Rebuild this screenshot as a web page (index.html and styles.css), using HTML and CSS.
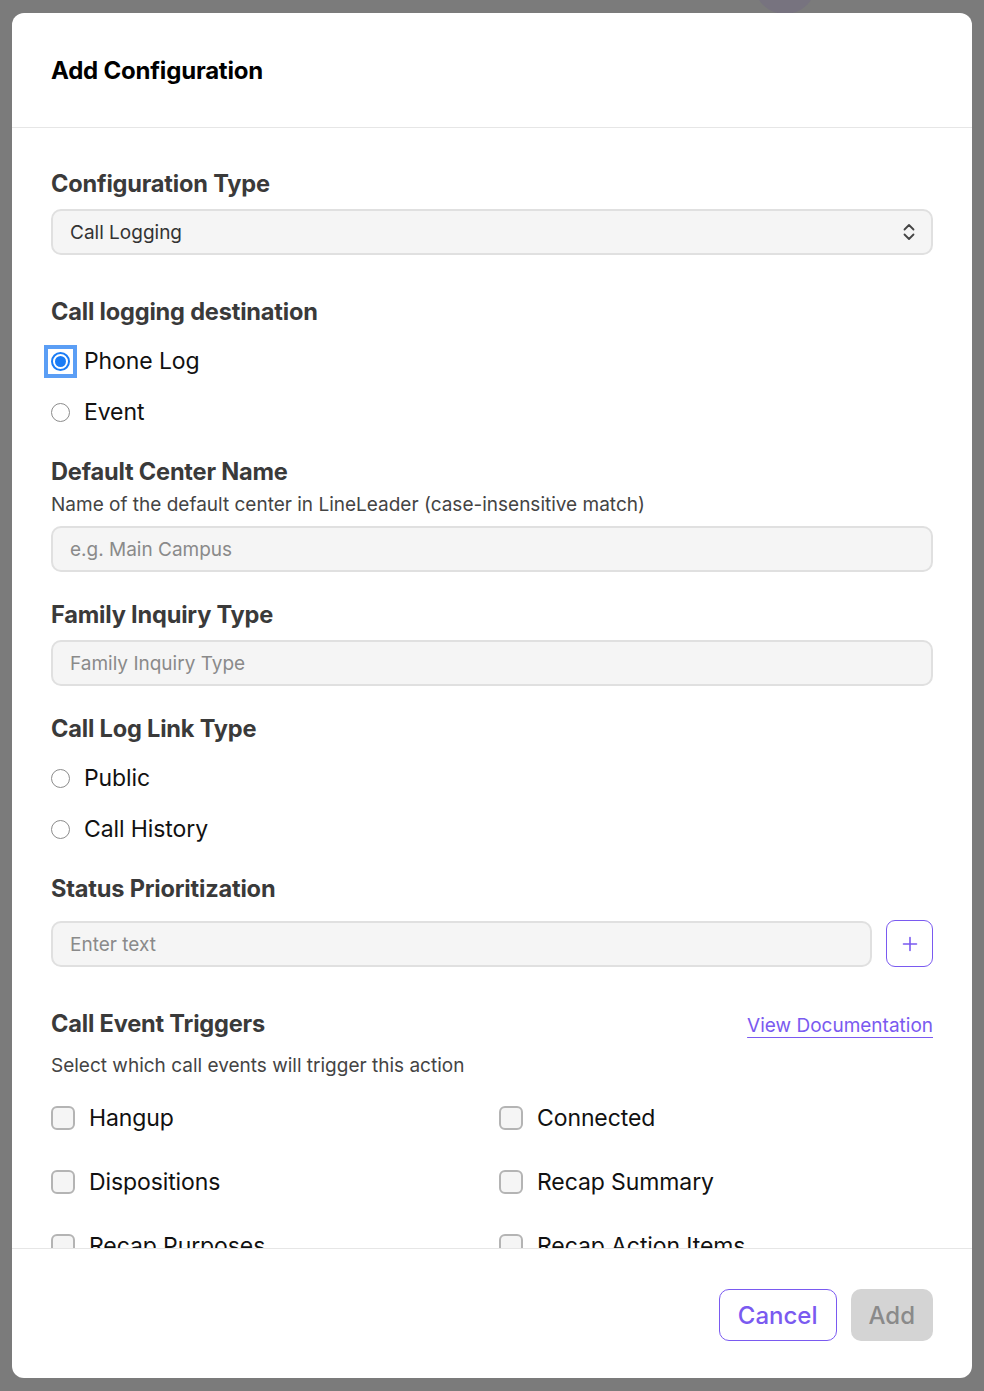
FILE: index.html
```html
<!DOCTYPE html>
<html>
<head>
  <title>Add Configuration</title>
  <link rel="stylesheet" href="styles.css">
</head>
<body>
  <div class="backdrop-avatar"></div>
  <div class="modal">
    <div class="modal-header">Add Configuration</div>

    <div class="modal-body">
      <div class="section section-wide">
        <div class="label">Configuration Type</div>
        <div class="select">
          <span>Call Logging</span>
          <svg class="chevrons" width="14" height="20" viewBox="0 0 14 20">
            <path d="M2.5 7.5 L7 3 L11.5 7.5" fill="none" stroke="#444" stroke-width="1.8" stroke-linecap="round" stroke-linejoin="round"/>
            <path d="M2.5 12.5 L7 17 L11.5 12.5" fill="none" stroke="#444" stroke-width="1.8" stroke-linecap="round" stroke-linejoin="round"/>
          </svg>
        </div>
      </div>

      <div class="section">
        <div class="label">Call logging destination</div>
        <div class="radio-list">
          <label class="radio-row"><span class="radio checked focused"></span>Phone Log</label>
          <label class="radio-row"><span class="radio"></span>Event</label>
        </div>
      </div>

      <div class="section">
        <div class="label">Default Center Name</div>
        <div class="hint">Name of the default center in LineLeader (case-insensitive match)</div>
        <div class="input placeholder">e.g. Main Campus</div>
      </div>

      <div class="section">
        <div class="label">Family Inquiry Type</div>
        <div class="input placeholder">Family Inquiry Type</div>
      </div>

      <div class="section">
        <div class="label">Call Log Link Type</div>
        <div class="radio-list">
          <label class="radio-row"><span class="radio"></span>Public</label>
          <label class="radio-row"><span class="radio"></span>Call History</label>
        </div>
      </div>

      <div class="section section-wide">
        <div class="label">Status Prioritization</div>
        <div class="input-row">
          <div class="input placeholder">Enter text</div>
          <button class="icon-button">
            <svg width="18" height="18" viewBox="0 0 18 18">
              <path d="M9 2.5 V15.5 M2.5 9 H15.5" stroke="#7a5af0" stroke-width="1.6" stroke-linecap="round"/>
            </svg>
          </button>
        </div>
      </div>

      <div class="section">
        <div class="label-row">
          <div class="label">Call Event Triggers</div>
          <a class="doc-link" href="#">View Documentation</a>
        </div>
        <div class="hint hint-gap">Select which call events will trigger this action</div>
        <div class="checkbox-grid">
          <label class="check-row"><span class="checkbox"></span>Hangup</label>
          <label class="check-row"><span class="checkbox"></span>Connected</label>
          <label class="check-row"><span class="checkbox"></span>Dispositions</label>
          <label class="check-row"><span class="checkbox"></span>Recap Summary</label>
          <label class="check-row"><span class="checkbox"></span>Recap Purposes</label>
          <label class="check-row"><span class="checkbox"></span>Recap Action Items</label>
        </div>
      </div>
    </div>

    <div class="modal-footer">
      <button class="button button-outline">Cancel</button>
      <button class="button button-disabled">Add</button>
    </div>
  </div>
</body>
</html>
```

FILE: styles.css
```css
body {
  margin: 0;
  padding: 13px 12px;
  background-color: #7b7b7b;
  font-family: Inter, 'Noto Sans', 'Liberation Sans', sans-serif;
  color: #111;
  box-sizing: border-box;
  height: 1391px;
  overflow: hidden;
  position: relative;
}

/* avatar of the page behind the dimmed overlay */
.backdrop-avatar {
  position: absolute;
  left: 754px;
  top: -48px;
  width: 62px;
  height: 62px;
  border-radius: 50%;
  background-color: #77737f;
}

.modal {
  position: relative;
  height: 1365px;
  background-color: #fff;
  border-radius: 12px;
  display: flex;
  flex-direction: column;
  overflow: hidden;
}

.modal-header {
  height: 115px;
  flex-shrink: 0;
  display: flex;
  align-items: center;
  padding: 0 39px;
  font-size: 24px;
  font-weight: 700;
  color: #000;
  letter-spacing: -0.2px;
  border-bottom: 1px solid #e6e6e6;
  box-sizing: border-box;
}

.modal-body {
  flex: 1;
  overflow: hidden;
  padding: 42px 39px 0;
}

.section {
  display: flex;
  flex-direction: column;
  margin-bottom: 29px;
}

.section-wide {
  margin-bottom: 43px;
}

.label {
  font-size: 23.6px;
  line-height: 28px;
  font-weight: 700;
  color: #3a3a3a;
  letter-spacing: -0.2px;
  margin-bottom: 11px;
}

.hint {
  font-size: 19px;
  line-height: 24px;
  color: #444;
  margin-top: -4px;
  margin-bottom: 9px;
}

.hint-gap {
  margin-top: 5px;
  margin-bottom: 23px;
}

.select,
.input {
  height: 46px;
  box-sizing: border-box;
  border: 2px solid #e0e0e0;
  border-radius: 10px;
  background-color: #f5f5f5;
  padding: 0 17px;
  display: flex;
  align-items: center;
  justify-content: space-between;
  font-size: 19px;
  color: #333;
}

.placeholder {
  color: #8a8a8a;
}

.chevrons {
  margin-right: -2px;
}

.radio-list {
  display: flex;
  flex-direction: column;
  gap: 17px;
  margin-top: 7px;
}

.radio-row,
.check-row {
  display: flex;
  align-items: center;
  height: 34px;
  font-size: 23px;
  color: #111;
  letter-spacing: -0.1px;
}

.radio {
  width: 19px;
  height: 19px;
  box-sizing: border-box;
  border-radius: 50%;
  border: 1.5px solid #8c8c8c;
  background-color: #fff;
  margin-right: 14px;
  flex-shrink: 0;
  position: relative;
}

.radio.checked {
  border: 2px solid #1a7cf5;
}

.radio.checked:before {
  content: "";
  position: absolute;
  left: 2px;
  top: 2px;
  width: 11px;
  height: 11px;
  border-radius: 50%;
  background-color: #1a7cf5;
}

/* square focus ring around the selected radio */
.radio.focused:after {
  content: "";
  position: absolute;
  left: -9px;
  top: -9px;
  width: 33px;
  height: 33px;
  box-sizing: border-box;
  border: 4px solid #5b9ef5;
}

.input-row {
  display: flex;
  gap: 14px;
  margin-top: 7px;
}

.input-row .input {
  flex: 1;
}

.icon-button {
  width: 47px;
  height: 47px;
  margin-top: -1px;
  box-sizing: border-box;
  border: 1.5px solid #7a5af0;
  border-radius: 9px;
  background-color: #fff;
  display: flex;
  align-items: center;
  justify-content: center;
  padding: 0;
  cursor: pointer;
}

.label-row {
  display: flex;
  justify-content: space-between;
  align-items: baseline;
}

.doc-link {
  font-size: 19px;
  color: #7a5af0;
  text-decoration: underline;
  text-underline-offset: 5px;
  text-decoration-thickness: 1px;
}

.checkbox-grid {
  display: grid;
  grid-template-columns: 1fr 1fr;
  column-gap: 14px;
  row-gap: 30px;
}

.checkbox {
  width: 24px;
  height: 24px;
  box-sizing: border-box;
  border: 2px solid #b4b4b4;
  border-radius: 6px;
  background-color: #f5f5f5;
  margin-right: 14px;
  flex-shrink: 0;
}

.modal-footer {
  flex-shrink: 0;
  border-top: 1px solid #e6e6e6;
  padding: 40px 39px 37px;
  display: flex;
  justify-content: flex-end;
  gap: 14px;
}

.button {
  height: 52px;
  box-sizing: border-box;
  border-radius: 10px;
  font-family: Inter, 'Noto Sans', 'Liberation Sans', sans-serif;
  font-size: 24px;
  font-weight: 500;
  padding: 0 18px;
  cursor: pointer;
}

.button-outline {
  background-color: #fff;
  border: 1.5px solid #7a5af0;
  color: #7a5af0;
}

.button-disabled {
  background-color: #d4d4d4;
  border: none;
  color: #8a8a8a;
}
```
